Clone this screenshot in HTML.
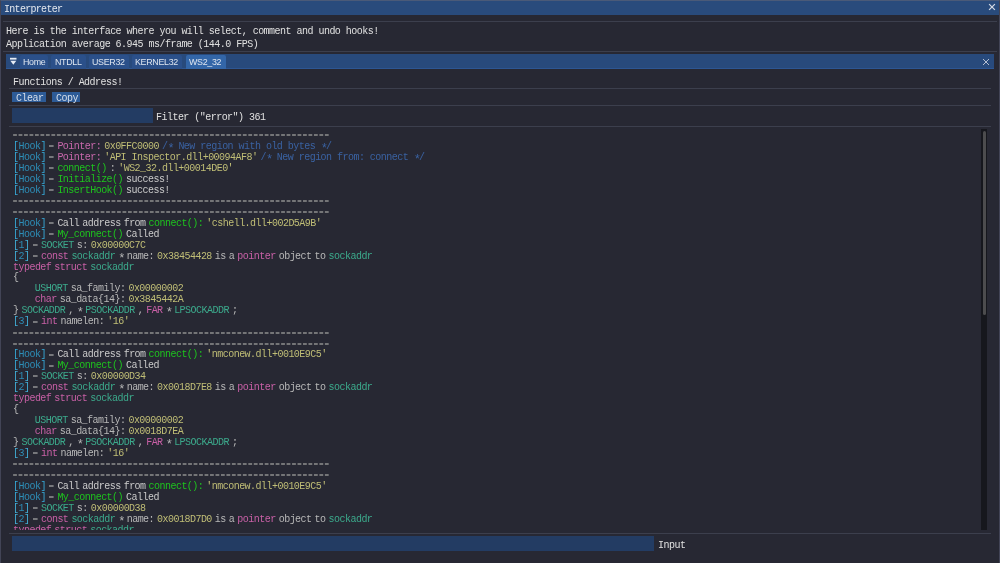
<!DOCTYPE html>
<html><head><meta charset="utf-8">
<style>
*{margin:0;padding:0;box-sizing:border-box}
html,body{width:1000px;height:563px;overflow:hidden;background:#272833}
body{position:relative;font-family:"Liberation Mono",monospace;font-size:10px;letter-spacing:-0.53px;color:#e0e0e0}
.a{position:absolute}
.t{position:absolute;white-space:pre;line-height:11px;will-change:transform}
.sep{position:absolute;height:1px;background:#3c3f4d}
#win{position:absolute;left:0;top:0;width:1000px;height:563px;border:1px solid #424456;border-bottom:none;border-top-color:#4a5a78}
#title{position:absolute;left:1px;top:1px;width:998px;height:14px;background:#294b7c}
#tabbar{position:absolute;left:6px;top:54px;width:988px;height:15px;background:#284a7c;border-bottom:1px solid #2d5693}
.tab{position:absolute;top:55px;height:14px;background:#2b508a;border-radius:2px 2px 0 0}
.tab.act{background:#3366a8}
.tt{position:absolute;font-family:"Liberation Sans",sans-serif;font-size:8.9px;letter-spacing:-0.3px;line-height:10px;color:#dfe6f0;white-space:pre;will-change:transform}
.btn{position:absolute;top:92px;height:10px;background:#2d5b97}
.frame{position:absolute;background:#233c63}
#log{position:absolute;left:0;top:128px;width:980px;height:402px;overflow:hidden;will-change:transform}
.r{position:absolute;left:0;height:11px;width:980px;line-height:11px;white-space:pre}
.r span{position:absolute;top:0}
.r u{text-decoration:none;color:#2d8db6}
.r i{font-style:normal;position:relative;top:3px;font-size:12px;letter-spacing:-1.73px;line-height:0}
.d{position:absolute;top:4.3px;width:4.2px;height:1.8px;background:#b4b4b4}
.dl{position:absolute;top:3.3px}
#sb{position:absolute;left:981px;top:129px;width:6px;height:401px;background:#16171d}
#thumb{position:absolute;left:982.5px;top:131px;width:3px;height:184px;background:#4c4c4e;border-radius:1.5px}
</style></head><body>
<div id="win"></div>
<div id="title"></div>
<div class="t" style="left:3.6px;top:3.5px;color:#e4e8ef;letter-spacing:-0.7px">Interpreter</div>
<svg class="a" style="left:988px;top:3.4px" width="8" height="8" viewBox="0 0 8 8"><path d="M1.1 1.1L6.9 6.9M6.9 1.1L1.1 6.9" stroke="#d2d9e4" stroke-width="1.25"/></svg>
<div class="sep" style="left:3px;top:21px;width:994px"></div>
<div class="t" style="left:6.2px;top:26px;letter-spacing:-0.52px">Here is the interface where you will select, comment and undo hooks!</div>
<div class="t" style="left:6.2px;top:39px;letter-spacing:-0.52px">Application average 6.945 ms/frame (144.0 FPS)</div>
<div class="sep" style="left:3px;top:51px;width:994px"></div>
<div id="tabbar"></div>
<svg class="a" style="left:9px;top:57px" width="9" height="9" viewBox="0 0 9 9"><rect x="1" y="0.8" width="6.5" height="1.8" fill="#e6ecf4"/><path d="M1.3 3.8H7.3L4.3 7.8Z" fill="#e6ecf4"/></svg>
<div class="tab" style="left:20px;width:28px"></div>
<div class="tab" style="left:51px;width:35px"></div>
<div class="tab" style="left:89px;width:40px"></div>
<div class="tab" style="left:132px;width:50px"></div>
<div class="tab act" style="left:186px;width:40px"></div>
<div class="tt" style="left:23px;top:56.9px">Home</div>
<div class="tt" style="left:55px;top:56.9px">NTDLL</div>
<div class="tt" style="left:92px;top:56.9px">USER32</div>
<div class="tt" style="left:135px;top:56.9px">KERNEL32</div>
<div class="tt" style="left:189px;top:56.9px">WS2_32</div>
<svg class="a" style="left:981.8px;top:57.5px" width="8" height="8" viewBox="0 0 8 8"><path d="M1 1L7 7M7 1L1 7" stroke="#b4bed0" stroke-width="1"/></svg>
<div class="t" style="left:12.5px;top:77px">Functions / Address!</div>
<div class="sep" style="left:9px;top:88px;width:982px"></div>
<div class="btn" style="left:12px;width:34px"></div>
<div class="btn" style="left:52px;width:28px"></div>
<div class="t" style="left:15.6px;top:92.8px;color:#d6deea">Clear</div>
<div class="t" style="left:55.6px;top:92.8px;color:#d6deea">Copy</div>
<div class="sep" style="left:9px;top:105px;width:982px"></div>
<div class="frame" style="left:12px;top:108px;width:141px;height:15px"></div>
<div class="t" style="left:156px;top:111.5px">Filter ("error") 361</div>
<div class="sep" style="left:9px;top:126px;width:982px"></div>
<div id="log">
<div class="r" style="top:1.86px"><svg class="dl" style="left:13.00px" width="317.26" height="4"><line x1="0.1" y1="2" x2="317.26" y2="2" stroke="#8e8e8e" stroke-width="1.6" stroke-dasharray="3.8 1.67"/></svg></div>
<div class="r" style="top:12.83px"><span style="left:13.00px;color:#36a8d6">[<u>Hook</u>]</span><svg class="dl" style="left:49.07px" width="6" height="4"><line x1="0" y1="2" x2="4.6" y2="2" stroke="#a8a8a8" stroke-width="1.25"/></svg><span style="left:57.39px;color:#c868ac">Pointer:</span><span style="left:104.20px;color:#c0be76">0x0FFC0000</span><span style="left:161.95px;color:#3a62a2">/<i>*</i>&#160;New&#160;region&#160;with&#160;old&#160;bytes&#160;<i>*</i>/</span></div>
<div class="r" style="top:23.80px"><span style="left:13.00px;color:#36a8d6">[<u>Hook</u>]</span><svg class="dl" style="left:49.07px" width="6" height="4"><line x1="0" y1="2" x2="4.6" y2="2" stroke="#a8a8a8" stroke-width="1.25"/></svg><span style="left:57.39px;color:#c868ac">Pointer:</span><span style="left:104.20px;color:#c0be76">&#x27;API&#160;Inspector.dll+00094AF8&#x27;</span><span style="left:260.41px;color:#3a62a2">/<i>*</i>&#160;New&#160;region&#160;from:&#160;connect&#160;<i>*</i>/</span></div>
<div class="r" style="top:34.77px"><span style="left:13.00px;color:#36a8d6">[<u>Hook</u>]</span><svg class="dl" style="left:49.07px" width="6" height="4"><line x1="0" y1="2" x2="4.6" y2="2" stroke="#a8a8a8" stroke-width="1.25"/></svg><span style="left:57.39px;color:#1ec41e">connect()</span><span style="left:109.67px;color:#b8b8b8">:</span><span style="left:118.19px;color:#c0be76">&#x27;WS2_32.dll+00014DE0&#x27;</span></div>
<div class="r" style="top:45.74px"><span style="left:13.00px;color:#36a8d6">[<u>Hook</u>]</span><svg class="dl" style="left:49.07px" width="6" height="4"><line x1="0" y1="2" x2="4.6" y2="2" stroke="#a8a8a8" stroke-width="1.25"/></svg><span style="left:57.39px;color:#1ec41e">Initialize()</span><span style="left:126.08px;color:#cacaca">success!</span></div>
<div class="r" style="top:56.71px"><span style="left:13.00px;color:#36a8d6">[<u>Hook</u>]</span><svg class="dl" style="left:49.07px" width="6" height="4"><line x1="0" y1="2" x2="4.6" y2="2" stroke="#a8a8a8" stroke-width="1.25"/></svg><span style="left:57.39px;color:#1ec41e">InsertHook()</span><span style="left:126.08px;color:#cacaca">success!</span></div>
<div class="r" style="top:67.68px"><svg class="dl" style="left:13.00px" width="317.26" height="4"><line x1="0.1" y1="2" x2="317.26" y2="2" stroke="#8e8e8e" stroke-width="1.6" stroke-dasharray="3.8 1.67"/></svg></div>
<div class="r" style="top:78.65px"><svg class="dl" style="left:13.00px" width="317.26" height="4"><line x1="0.1" y1="2" x2="317.26" y2="2" stroke="#8e8e8e" stroke-width="1.6" stroke-dasharray="3.8 1.67"/></svg></div>
<div class="r" style="top:89.62px"><span style="left:13.00px;color:#36a8d6">[<u>Hook</u>]</span><svg class="dl" style="left:49.07px" width="6" height="4"><line x1="0" y1="2" x2="4.6" y2="2" stroke="#a8a8a8" stroke-width="1.25"/></svg><span style="left:57.39px;color:#cacaca">Call</span><span style="left:82.32px;color:#cacaca">address</span><span style="left:123.66px;color:#cacaca">from</span><span style="left:148.59px;color:#1ec41e">connect():</span><span style="left:206.34px;color:#c0be76">&#x27;cshell.dll+002D5A9B&#x27;</span></div>
<div class="r" style="top:100.59px"><span style="left:13.00px;color:#36a8d6">[<u>Hook</u>]</span><svg class="dl" style="left:49.07px" width="6" height="4"><line x1="0" y1="2" x2="4.6" y2="2" stroke="#a8a8a8" stroke-width="1.25"/></svg><span style="left:57.39px;color:#1ec41e">My_connect()</span><span style="left:126.08px;color:#cacaca">Called</span></div>
<div class="r" style="top:111.56px"><span style="left:13.00px;color:#42b0d8">[<u>1</u>]</span><svg class="dl" style="left:32.66px" width="6" height="4"><line x1="0" y1="2" x2="4.6" y2="2" stroke="#a8a8a8" stroke-width="1.25"/></svg><span style="left:40.98px;color:#3caa8c">SOCKET</span><span style="left:76.85px;color:#b8b8b8">s:</span><span style="left:90.84px;color:#c0be76">0x00000C7C</span></div>
<div class="r" style="top:122.53px"><span style="left:13.00px;color:#42b0d8">[<u>2</u>]</span><svg class="dl" style="left:32.66px" width="6" height="4"><line x1="0" y1="2" x2="4.6" y2="2" stroke="#a8a8a8" stroke-width="1.25"/></svg><span style="left:40.98px;color:#c860a6">const</span><span style="left:71.38px;color:#3caa8c">sockaddr</span><span style="left:118.19px;color:#b8b8b8"><i>*</i></span><span style="left:126.71px;color:#b8b8b8">name:</span><span style="left:157.11px;color:#c0be76">0x38454428</span><span style="left:214.86px;color:#b8b8b8">is</span><span style="left:228.85px;color:#b8b8b8">a</span><span style="left:237.37px;color:#c860a6">pointer</span><span style="left:278.71px;color:#b8b8b8">object</span><span style="left:314.58px;color:#b8b8b8">to</span><span style="left:328.57px;color:#3caa8c">sockaddr</span></div>
<div class="r" style="top:133.50px"><span style="left:13.00px;color:#c860a6">typedef</span><span style="left:54.34px;color:#c860a6">struct</span><span style="left:90.21px;color:#3caa8c">sockaddr</span></div>
<div class="r" style="top:144.47px"><span style="left:13.00px;color:#b8b8b8">{</span></div>
<div class="r" style="top:155.44px"><span style="left:34.80px;color:#3caa8c">USHORT</span><span style="left:70.67px;color:#b8b8b8">sa_family:</span><span style="left:128.42px;color:#c0be76">0x00000002</span></div>
<div class="r" style="top:166.41px"><span style="left:34.80px;color:#c860a6">char</span><span style="left:59.73px;color:#b8b8b8">sa_data{14}:</span><span style="left:128.42px;color:#c0be76">0x3845442A</span></div>
<div class="r" style="top:177.38px"><span style="left:13.00px;color:#b8b8b8">}</span><span style="left:21.52px;color:#3caa8c">SOCKADDR</span><span style="left:68.33px;color:#b8b8b8">,</span><span style="left:76.85px;color:#b8b8b8"><i>*</i></span><span style="left:85.37px;color:#3caa8c">PSOCKADDR</span><span style="left:137.65px;color:#b8b8b8">,</span><span style="left:146.17px;color:#c860a6">FAR</span><span style="left:165.63px;color:#b8b8b8"><i>*</i></span><span style="left:174.15px;color:#3caa8c">LPSOCKADDR</span><span style="left:231.90px;color:#b8b8b8">;</span></div>
<div class="r" style="top:188.35px"><span style="left:13.00px;color:#42b0d8">[<u>3</u>]</span><svg class="dl" style="left:32.66px" width="6" height="4"><line x1="0" y1="2" x2="4.6" y2="2" stroke="#a8a8a8" stroke-width="1.25"/></svg><span style="left:40.98px;color:#c860a6">int</span><span style="left:60.44px;color:#b8b8b8">namelen:</span><span style="left:107.25px;color:#c0be76">&#x27;16&#x27;</span></div>
<div class="r" style="top:199.32px"><svg class="dl" style="left:13.00px" width="317.26" height="4"><line x1="0.1" y1="2" x2="317.26" y2="2" stroke="#8e8e8e" stroke-width="1.6" stroke-dasharray="3.8 1.67"/></svg></div>
<div class="r" style="top:210.29px"><svg class="dl" style="left:13.00px" width="317.26" height="4"><line x1="0.1" y1="2" x2="317.26" y2="2" stroke="#8e8e8e" stroke-width="1.6" stroke-dasharray="3.8 1.67"/></svg></div>
<div class="r" style="top:221.26px"><span style="left:13.00px;color:#36a8d6">[<u>Hook</u>]</span><svg class="dl" style="left:49.07px" width="6" height="4"><line x1="0" y1="2" x2="4.6" y2="2" stroke="#a8a8a8" stroke-width="1.25"/></svg><span style="left:57.39px;color:#cacaca">Call</span><span style="left:82.32px;color:#cacaca">address</span><span style="left:123.66px;color:#cacaca">from</span><span style="left:148.59px;color:#1ec41e">connect():</span><span style="left:206.34px;color:#c0be76">&#x27;nmconew.dll+0010E9C5&#x27;</span></div>
<div class="r" style="top:232.23px"><span style="left:13.00px;color:#36a8d6">[<u>Hook</u>]</span><svg class="dl" style="left:49.07px" width="6" height="4"><line x1="0" y1="2" x2="4.6" y2="2" stroke="#a8a8a8" stroke-width="1.25"/></svg><span style="left:57.39px;color:#1ec41e">My_connect()</span><span style="left:126.08px;color:#cacaca">Called</span></div>
<div class="r" style="top:243.20px"><span style="left:13.00px;color:#42b0d8">[<u>1</u>]</span><svg class="dl" style="left:32.66px" width="6" height="4"><line x1="0" y1="2" x2="4.6" y2="2" stroke="#a8a8a8" stroke-width="1.25"/></svg><span style="left:40.98px;color:#3caa8c">SOCKET</span><span style="left:76.85px;color:#b8b8b8">s:</span><span style="left:90.84px;color:#c0be76">0x00000D34</span></div>
<div class="r" style="top:254.17px"><span style="left:13.00px;color:#42b0d8">[<u>2</u>]</span><svg class="dl" style="left:32.66px" width="6" height="4"><line x1="0" y1="2" x2="4.6" y2="2" stroke="#a8a8a8" stroke-width="1.25"/></svg><span style="left:40.98px;color:#c860a6">const</span><span style="left:71.38px;color:#3caa8c">sockaddr</span><span style="left:118.19px;color:#b8b8b8"><i>*</i></span><span style="left:126.71px;color:#b8b8b8">name:</span><span style="left:157.11px;color:#c0be76">0x0018D7E8</span><span style="left:214.86px;color:#b8b8b8">is</span><span style="left:228.85px;color:#b8b8b8">a</span><span style="left:237.37px;color:#c860a6">pointer</span><span style="left:278.71px;color:#b8b8b8">object</span><span style="left:314.58px;color:#b8b8b8">to</span><span style="left:328.57px;color:#3caa8c">sockaddr</span></div>
<div class="r" style="top:265.14px"><span style="left:13.00px;color:#c860a6">typedef</span><span style="left:54.34px;color:#c860a6">struct</span><span style="left:90.21px;color:#3caa8c">sockaddr</span></div>
<div class="r" style="top:276.11px"><span style="left:13.00px;color:#b8b8b8">{</span></div>
<div class="r" style="top:287.08px"><span style="left:34.80px;color:#3caa8c">USHORT</span><span style="left:70.67px;color:#b8b8b8">sa_family:</span><span style="left:128.42px;color:#c0be76">0x00000002</span></div>
<div class="r" style="top:298.05px"><span style="left:34.80px;color:#c860a6">char</span><span style="left:59.73px;color:#b8b8b8">sa_data{14}:</span><span style="left:128.42px;color:#c0be76">0x0018D7EA</span></div>
<div class="r" style="top:309.02px"><span style="left:13.00px;color:#b8b8b8">}</span><span style="left:21.52px;color:#3caa8c">SOCKADDR</span><span style="left:68.33px;color:#b8b8b8">,</span><span style="left:76.85px;color:#b8b8b8"><i>*</i></span><span style="left:85.37px;color:#3caa8c">PSOCKADDR</span><span style="left:137.65px;color:#b8b8b8">,</span><span style="left:146.17px;color:#c860a6">FAR</span><span style="left:165.63px;color:#b8b8b8"><i>*</i></span><span style="left:174.15px;color:#3caa8c">LPSOCKADDR</span><span style="left:231.90px;color:#b8b8b8">;</span></div>
<div class="r" style="top:319.99px"><span style="left:13.00px;color:#42b0d8">[<u>3</u>]</span><svg class="dl" style="left:32.66px" width="6" height="4"><line x1="0" y1="2" x2="4.6" y2="2" stroke="#a8a8a8" stroke-width="1.25"/></svg><span style="left:40.98px;color:#c860a6">int</span><span style="left:60.44px;color:#b8b8b8">namelen:</span><span style="left:107.25px;color:#c0be76">&#x27;16&#x27;</span></div>
<div class="r" style="top:330.96px"><svg class="dl" style="left:13.00px" width="317.26" height="4"><line x1="0.1" y1="2" x2="317.26" y2="2" stroke="#8e8e8e" stroke-width="1.6" stroke-dasharray="3.8 1.67"/></svg></div>
<div class="r" style="top:341.93px"><svg class="dl" style="left:13.00px" width="317.26" height="4"><line x1="0.1" y1="2" x2="317.26" y2="2" stroke="#8e8e8e" stroke-width="1.6" stroke-dasharray="3.8 1.67"/></svg></div>
<div class="r" style="top:352.90px"><span style="left:13.00px;color:#36a8d6">[<u>Hook</u>]</span><svg class="dl" style="left:49.07px" width="6" height="4"><line x1="0" y1="2" x2="4.6" y2="2" stroke="#a8a8a8" stroke-width="1.25"/></svg><span style="left:57.39px;color:#cacaca">Call</span><span style="left:82.32px;color:#cacaca">address</span><span style="left:123.66px;color:#cacaca">from</span><span style="left:148.59px;color:#1ec41e">connect():</span><span style="left:206.34px;color:#c0be76">&#x27;nmconew.dll+0010E9C5&#x27;</span></div>
<div class="r" style="top:363.87px"><span style="left:13.00px;color:#36a8d6">[<u>Hook</u>]</span><svg class="dl" style="left:49.07px" width="6" height="4"><line x1="0" y1="2" x2="4.6" y2="2" stroke="#a8a8a8" stroke-width="1.25"/></svg><span style="left:57.39px;color:#1ec41e">My_connect()</span><span style="left:126.08px;color:#cacaca">Called</span></div>
<div class="r" style="top:374.84px"><span style="left:13.00px;color:#42b0d8">[<u>1</u>]</span><svg class="dl" style="left:32.66px" width="6" height="4"><line x1="0" y1="2" x2="4.6" y2="2" stroke="#a8a8a8" stroke-width="1.25"/></svg><span style="left:40.98px;color:#3caa8c">SOCKET</span><span style="left:76.85px;color:#b8b8b8">s:</span><span style="left:90.84px;color:#c0be76">0x00000D38</span></div>
<div class="r" style="top:385.81px"><span style="left:13.00px;color:#42b0d8">[<u>2</u>]</span><svg class="dl" style="left:32.66px" width="6" height="4"><line x1="0" y1="2" x2="4.6" y2="2" stroke="#a8a8a8" stroke-width="1.25"/></svg><span style="left:40.98px;color:#c860a6">const</span><span style="left:71.38px;color:#3caa8c">sockaddr</span><span style="left:118.19px;color:#b8b8b8"><i>*</i></span><span style="left:126.71px;color:#b8b8b8">name:</span><span style="left:157.11px;color:#c0be76">0x0018D7D0</span><span style="left:214.86px;color:#b8b8b8">is</span><span style="left:228.85px;color:#b8b8b8">a</span><span style="left:237.37px;color:#c860a6">pointer</span><span style="left:278.71px;color:#b8b8b8">object</span><span style="left:314.58px;color:#b8b8b8">to</span><span style="left:328.57px;color:#3caa8c">sockaddr</span></div>
<div class="r" style="top:396.78px"><span style="left:13.00px;color:#c860a6">typedef</span><span style="left:54.34px;color:#c860a6">struct</span><span style="left:90.21px;color:#3caa8c">sockaddr</span></div>
</div>
<div id="sb"></div>
<div id="thumb"></div>
<div class="sep" style="left:9px;top:533px;width:982px"></div>
<div class="frame" style="left:12px;top:536px;width:642px;height:15px"></div>
<div class="t" style="left:657.5px;top:540px">Input</div>
</body></html>
